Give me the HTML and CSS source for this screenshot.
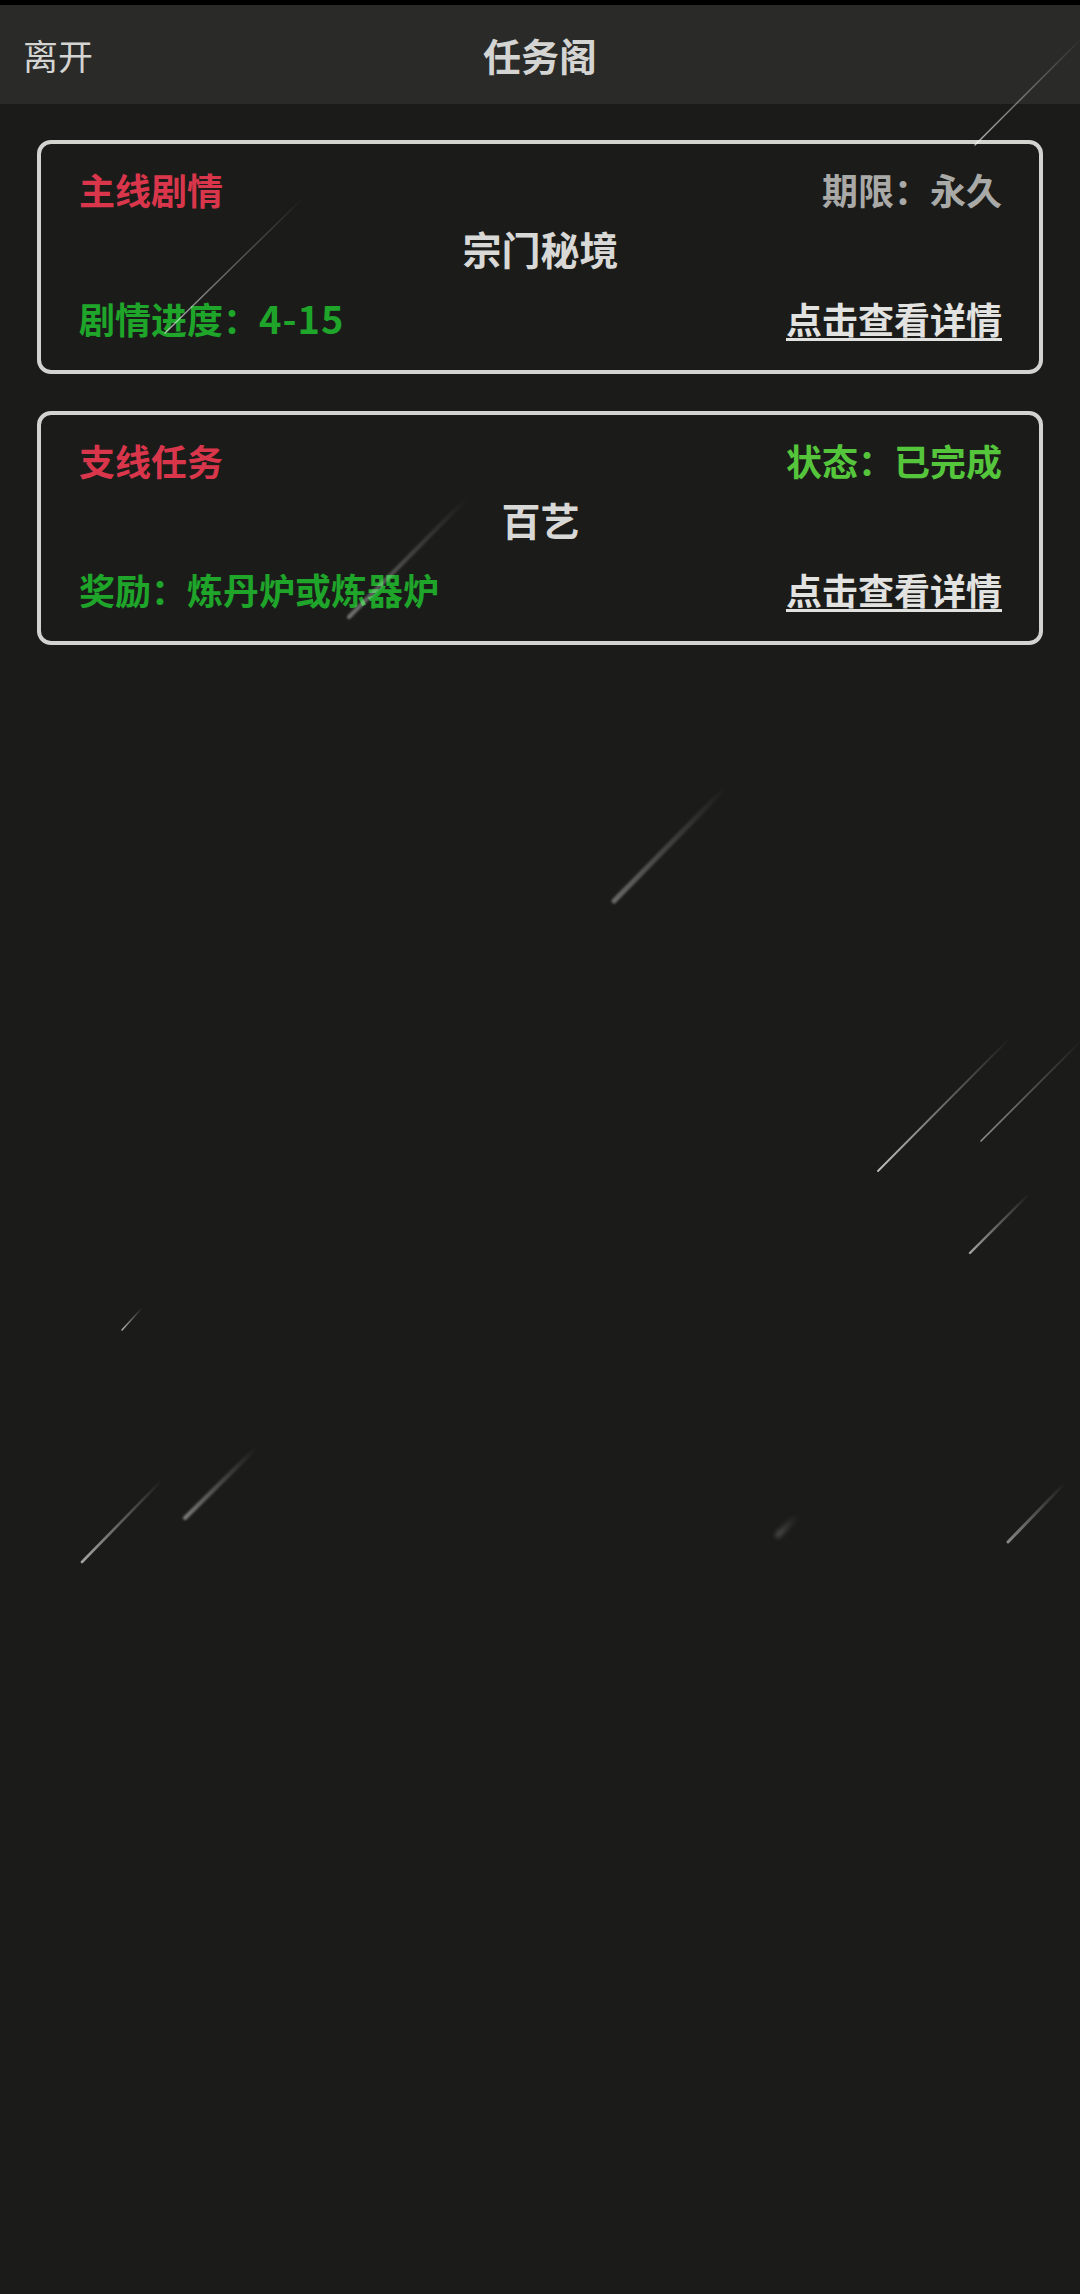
FILE: index.html
```html
<!DOCTYPE html>
<html lang="zh-CN">
<head>
<meta charset="utf-8">
<title>任务阁</title>
<link rel="stylesheet" href="styles.css">
</head>
<body>
<div class="page">
  <div class="statusbar"></div>
  <header class="topbar">
    <span class="back">离开</span>
    <h1 class="title">任务阁</h1>
    <span class="spacer"></span>
  </header>
  <main class="list">
    <section class="card">
      <span class="kind">主线剧情</span>
      <span class="meta meta-gray">期限：永久</span>
      <h2 class="name">宗门秘境</h2>
      <span class="info">剧情进度：<span class="num">4-15</span></span>
      <a class="detail">点击查看详情</a>
    </section>
    <section class="card">
      <span class="kind">支线任务</span>
      <span class="meta meta-green">状态：已完成</span>
      <h2 class="name">百艺</h2>
      <span class="info">奖励：炼丹炉或炼器炉</span>
      <a class="detail">点击查看详情</a>
    </section>
  </main>
  <svg class="streaks" viewBox="0 0 1080 2294" width="1080" height="2294" aria-hidden="true">
    <defs>
      <linearGradient id="fade" x1="0" y1="1" x2="1" y2="0">
        <stop offset="0" stop-color="#ffffff" stop-opacity="0.85"/>
        <stop offset="0.5" stop-color="#ffffff" stop-opacity="0.4"/>
        <stop offset="1" stop-color="#ffffff" stop-opacity="0"/>
      </linearGradient>
      <filter id="soft" x="-20%" y="-20%" width="140%" height="140%">
        <feGaussianBlur stdDeviation="1.2"/>
      </filter>
      <filter id="softer" x="-50%" y="-50%" width="200%" height="200%">
        <feGaussianBlur stdDeviation="2.5"/>
      </filter>
    </defs>
    <g stroke="url(#fade)" stroke-linecap="round" fill="none">
      <line x1="975" y1="145" x2="1082" y2="38" stroke-width="1.4" opacity="0.8"/>
      <line x1="165" y1="333" x2="303" y2="198" stroke-width="1.4" opacity="0.75"/>
      <line x1="349" y1="617" x2="468" y2="497" stroke-width="4" opacity="0.45" filter="url(#soft)"/>
      <line x1="614" y1="901" x2="727" y2="786" stroke-width="5" opacity="0.4" filter="url(#soft)"/>
      <line x1="878" y1="1171" x2="1010" y2="1038" stroke-width="1.8" opacity="0.85"/>
      <line x1="981" y1="1141" x2="1082" y2="1040" stroke-width="1.6" opacity="0.6"/>
      <line x1="970" y1="1253" x2="1029" y2="1194" stroke-width="2.4" opacity="0.7"/>
      <line x1="122" y1="1330" x2="142" y2="1308" stroke-width="1.4" opacity="0.8"/>
      <line x1="82" y1="1562" x2="162" y2="1480" stroke-width="2.6" opacity="0.7"/>
      <line x1="185" y1="1518" x2="257" y2="1447" stroke-width="4" opacity="0.5" filter="url(#soft)"/>
      <line x1="778" y1="1535" x2="798" y2="1515" stroke-width="5" opacity="0.3" filter="url(#softer)"/>
      <line x1="1008" y1="1542" x2="1065" y2="1483" stroke-width="3" opacity="0.55"/>
    </g>
  </svg>
</div>
</body>
</html>
```
FILE: styles.css
```css
html, body {
  margin: 0;
  padding: 0;
  background: #1b1c1a;
}

body {
  font-family: "Noto Sans CJK SC", "Noto Sans", sans-serif;
  color: #d6d6d4;
}

.page {
  position: relative;
  width: 1080px;
  min-height: 2294px;
  overflow: hidden;
}

.statusbar {
  height: 5px;
  background: #000;
}

.topbar {
  height: 99px;
  background: #2a2b29;
  display: grid;
  grid-template-columns: 1fr auto 1fr;
  align-items: center;
  padding: 0 23px;
}

.back {
  font-size: 35px;
  color: #d4d4d2;
  line-height: 1;
}

.title {
  margin: 0;
  font-size: 38px;
  font-weight: 700;
  color: #d4d4d2;
  line-height: 1;
}

.list {
  display: flex;
  flex-direction: column;
  gap: 37px;
  padding: 36px 37px;
}

.card {
  border: 4px solid #d3d3cf;
  border-radius: 14px;
  padding: 22px 37px 29px 38px;
  display: grid;
  grid-template-columns: 1fr 1fr;
  grid-template-areas:
    "kind meta"
    "name name"
    "info detail";
  font-size: 36px;
  font-weight: 700;
  line-height: 46px;
}

.kind {
  grid-area: kind;
  color: #d9364b;
}

.meta {
  grid-area: meta;
  text-align: right;
}

.meta-gray {
  color: #a9a9a7;
}

.meta-green {
  color: #55c63c;
}

.name {
  grid-area: name;
  margin: 12px 0 0 0;
  text-align: center;
  font-size: 39px;
  line-height: 49px;
  font-weight: 700;
  color: #d8d8d6;
}

.info {
  grid-area: info;
  margin-top: 22px;
  color: #1ea52a;
  white-space: nowrap;
}

.num {
  font-size: 38px;
  letter-spacing: 1px;
}

.detail {
  grid-area: detail;
  margin-top: 22px;
  text-align: right;
  color: #e2e2e0;
  text-decoration: underline;
  text-decoration-thickness: 3px;
  text-underline-offset: 4px;
}

.streaks {
  position: absolute;
  top: 0;
  left: 0;
  pointer-events: none;
}
```
